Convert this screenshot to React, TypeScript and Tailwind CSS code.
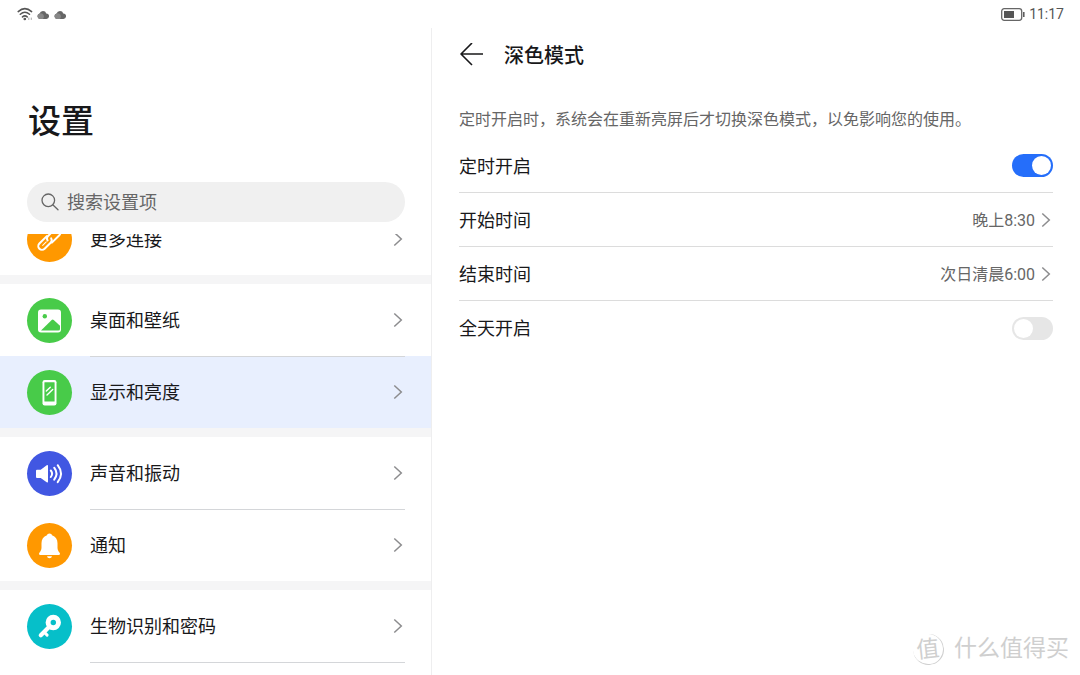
import type { ReactNode } from "react";

function Chevron() {
  return (
    <svg className="h-4 w-[10px] shrink-0" viewBox="0 0 10 16" fill="none" stroke="#8c8c8e" strokeWidth="1.5" aria-hidden="true">
      <path d="M1.3 1.5 8.3 8l-7 6.5" />
    </svg>
  );
}

function Glyph({ children }: { children: ReactNode }) {
  return (
    <svg className="size-[45px]" viewBox="0 0 45 45" fill="none" aria-hidden="true">
      {children}
    </svg>
  );
}

const linkGlyph = (
  <Glyph>
    <g stroke="#fff" strokeWidth="2" strokeLinecap="round" transform="rotate(-45 22.5 22.5)">
      <path d="M23 18.200H12.500a3.700 3.700 0 0 0 0 7.400H21a3.700 3.700 0 0 0 3.500-2.700" />
      <path d="M22 26.400h10.500a3.700 3.700 0 0 0 0-7.400H24a3.700 3.700 0 0 0-3.500 2.700" />
      <path d="M13.500 21.900h5" strokeWidth="1" />
    </g>
  </Glyph>
);

const pictureGlyph = (
  <Glyph>
    <rect x="11" y="11.5" width="23" height="23" rx="3" fill="#fff" />
    <circle cx="17.8" cy="18.3" r="2.2" fill="#48cb49" />
    <path d="M14 32.5 24.7 21.9q1-.9 2 0l6.3 5.8v3.2q0 1.6-1.6 1.6z" fill="#48cb49" />
  </Glyph>
);

const phoneGlyph = (
  <Glyph>
    <rect x="15.5" y="10" width="14" height="25.5" rx="2.2" fill="#fff" />
    <rect x="17.4" y="12.3" width="10.2" height="19.2" rx=".5" fill="#48cb49" />
    <path d="m19.3 21 4-3.8M20 25l5.7-5.5" stroke="#fff" strokeWidth="1.4" strokeLinecap="round" />
  </Glyph>
);

const soundGlyph = (
  <Glyph>
    <path d="M10 18.7q-1 0-1 1v6.2q0 1 1 1h3.7l6 4.4q1.3.8 1.3-.7V15q0-1.5-1.3-.7l-6 4.4z" fill="#fff" />
    <g stroke="#fff" strokeWidth="2" strokeLinecap="round">
      <path d="M23.8 19.5q2.6 3.2 0 6.5" />
      <path d="M27.2 16.7q4.6 6 0 12" />
      <path d="M30.7 14.2q6.6 8.5 0 17" />
    </g>
  </Glyph>
);

const bellGlyph = (
  <Glyph>
    <path
      d="M22.5 10.5c1.4 0 2.2.7 2.5 1.8 3.6 1.2 5.5 4.2 5.5 8v4.5c0 2.2 1 3.6 2.1 5 .8 1.1.4 2.2-.9 2.2H13.3c-1.3 0-1.7-1.1-.9-2.2 1.1-1.4 2.1-2.8 2.1-5v-4.5c0-3.8 1.9-6.8 5.5-8 .3-1.1 1.1-1.8 2.5-1.8z"
      fill="#fff"
    />
    <path d="M20 33.2h5q-.4 2-2.5 2t-2.5-2z" fill="#fff" />
  </Glyph>
);

const keyGlyph = (
  <Glyph>
    <path d="m21.5 23.5-7.700 7.700" stroke="#fff" strokeWidth="4.200" strokeLinecap="round" />
    <path d="m17.5 28.5 2.600 2.600" stroke="#fff" strokeWidth="3" strokeLinecap="round" />
    <circle cx="26.300" cy="18.500" r="5.200" stroke="#fff" strokeWidth="5" />
  </Glyph>
);

type Item = { label: string; color: string; glyph: ReactNode; selected?: boolean };

const groups: Item[][] = [
  [{ label: "更多连接", color: "bg-[#ff9800]", glyph: linkGlyph }],
  [
    { label: "桌面和壁纸", color: "bg-[#48cb49]", glyph: pictureGlyph },
    { label: "显示和亮度", color: "bg-[#48cb49]", glyph: phoneGlyph, selected: true },
  ],
  [
    { label: "声音和振动", color: "bg-[#4157e2]", glyph: soundGlyph },
    { label: "通知", color: "bg-[#ff9800]", glyph: bellGlyph },
  ],
  [{ label: "生物识别和密码", color: "bg-[#06bfc9]", glyph: keyGlyph }],
];

function MenuItem({ item, divider }: { item: Item; divider: boolean }) {
  return (
    <li>
      <a
        href="#"
        aria-current={item.selected ? "page" : undefined}
        className={`flex h-[72px] items-center gap-[18px] pr-7 pl-[27px] ${item.selected ? "bg-[#e8effe]" : ""}`}
      >
        <span className={`size-[45px] shrink-0 rounded-full ${item.color}`}>{item.glyph}</span>
        <span className="flex-1 pt-[2px] text-lg text-[#18181a]">{item.label}</span>
        <Chevron />
      </a>
      {divider && <div className="relative z-10 -mb-px ml-[90px] mr-[26px] h-px bg-[#d4d6d9]" />}
    </li>
  );
}

function Cloud() {
  return (
    <svg className="h-[9px] w-3" viewBox="0 0 12 9" aria-hidden="true">
      <path d="M3 9a2.8 2.8 0 0 1-.4-5.5A3.5 3.5 0 0 1 9.3 3.4 2.8 2.8 0 0 1 9.2 9z" fill="#666" />
      <path d="M3 9a2.8 2.8 0 0 1-.4-5.5q3-.6 4 1.5T6 9z" fill="#888" />
    </svg>
  );
}

function StatusBar() {
  return (
    <header className="flex h-7 shrink-0 items-center justify-between pr-4 pl-[17px]">
      <div className="flex items-center gap-1">
        <svg className="h-[14px] w-4" viewBox="0 0 16 14" fill="none" stroke="#555" strokeWidth="1.5" strokeLinecap="round" aria-hidden="true">
          <path d="M1.2 4.6q6.600-6 13.400 0M3.300 7.300q4.600-4 9.200 0M5.500 9.900q2.400-2 4.700 0" />
          <circle cx="7.800" cy="12" r=".6" fill="#555" />
          <path d="M11.800 11v1.500M14.300 11v1.500" stroke="#aaa" strokeWidth="1" />
        </svg>
        <div className="flex gap-[5px]">
          <Cloud />
          <Cloud />
        </div>
      </div>
      <div className="flex items-center gap-1">
        <svg className="h-[13px] w-6" viewBox="0 0 24 13" aria-hidden="true">
          <rect x=".7" y=".7" width="20" height="11.6" rx="2.5" fill="none" stroke="#666" strokeWidth="1.3" />
          <rect x="3" y="3" width="10" height="7" fill="#555" />
          <path d="M22.8 4v5" stroke="#555" strokeWidth="1.5" />
        </svg>
        <time className="text-sm leading-5 text-[#555]">11:17</time>
      </div>
    </header>
  );
}

function SwitchRow({ id, label, on, last }: { id: string; label: string; on?: boolean; last?: boolean }) {
  return (
    <div className={`flex h-[54px] items-center justify-between ${last ? "" : "border-b border-[#dcdcdc]"}`}>
      <label htmlFor={id} className="pt-[2px] text-lg text-[#18181a]">
        {label}
      </label>
      <input
        id={id}
        type="checkbox"
        role="switch"
        defaultChecked={on}
        className="flex h-[23px] w-[41px] appearance-none items-center rounded-full bg-[#e6e6e6] px-[2px] before:size-[19px] before:rounded-full before:bg-white checked:justify-end checked:bg-[#256efa]"
      />
    </div>
  );
}

function TimeRow({ label, value }: { label: string; value: string }) {
  return (
    <button type="button" className="flex h-[54px] w-full items-center border-b border-[#dcdcdc] pr-[2px] text-left">
      <span className="flex-1 pt-[2px] text-lg text-[#18181a]">{label}</span>
      <span className="mr-[6px] pt-[2px] text-base text-[#666]">{value}</span>
      <Chevron />
    </button>
  );
}

export default function App() {
  return (
    <div className="relative flex h-screen flex-col overflow-hidden bg-white font-['Roboto','Noto_Sans_CJK_SC',sans-serif]">
      <StatusBar />
      <div className="flex min-h-0 flex-1">
        <aside className="flex w-2/5 flex-col border-r border-[#eeeeef]">
          <h1 className="mt-[69px] px-7 text-[33px] leading-[50px] font-medium text-[#18181a]">设置</h1>
          <div className="mt-[35px] mr-[26px] ml-[27px] flex h-10 shrink-0 items-center gap-2 rounded-full bg-[#f0f0f0] px-[14px]">
            <svg className="size-[18px] shrink-0" viewBox="0 0 18 18" fill="none" stroke="#666" strokeWidth="1.3" strokeLinecap="round" aria-hidden="true">
              <circle cx="7.3" cy="7.3" r="6.3" />
              <path d="m12 12 5 4.8" />
            </svg>
            <input
              type="search"
              aria-label="搜索设置项"
              placeholder="搜索设置项"
              className="min-w-0 flex-1 bg-transparent pt-[2px] text-lg outline-none placeholder:text-[#666]"
            />
          </div>
          <nav className="mt-3 min-h-0 flex-1 overflow-hidden">
            <div className="-mt-[31px]">
              {groups.map((group, g) => (
                <ul key={group[0].label} className={g > 0 ? "border-t-[9px] border-[#f5f5f6]" : ""}>
                  {group.map((item, i) => (
                    <MenuItem key={item.label} item={item} divider={i < group.length - 1 || g === groups.length - 1} />
                  ))}
                </ul>
              ))}
            </div>
          </nav>
        </aside>
        <main className="flex-1 px-[27px]">
          <div className="flex h-[54px] items-center gap-5">
            <button type="button" aria-label="返回" className="ml-px">
              <svg className="size-6" viewBox="0 0 24 24" fill="none" stroke="#18181a" strokeWidth="1.6" aria-hidden="true">
                <path d="M23 11H1M12 0 1 11l11 11" strokeLinejoin="round" />
              </svg>
            </button>
            <h2 className="pt-[2px] text-xl font-medium text-[#18181a]">深色模式</h2>
          </div>
          <p className="mt-[26px] text-base leading-6 text-[#666]">
            定时开启时，系统会在重新亮屏后才切换深色模式，以免影响您的使用。
          </p>
          <div className="mt-[7px]">
            <SwitchRow id="scheduled" label="定时开启" on />
            <TimeRow label="开始时间" value="晚上8:30" />
            <TimeRow label="结束时间" value="次日清晨6:00" />
            <SwitchRow id="all-day" label="全天开启" last />
          </div>
        </main>
      </div>
      <div className="absolute right-[11px] bottom-[10px] flex items-center gap-[10px] text-[#cfcfcf]">
        <span className="flex size-[31px] -rotate-6 items-center justify-center rounded-full border-r border-b border-[#cfcfcf] text-[23px] leading-none">值</span>
        <span className="text-[23px] leading-8">什么值得买</span>
      </div>
    </div>
  );
}
